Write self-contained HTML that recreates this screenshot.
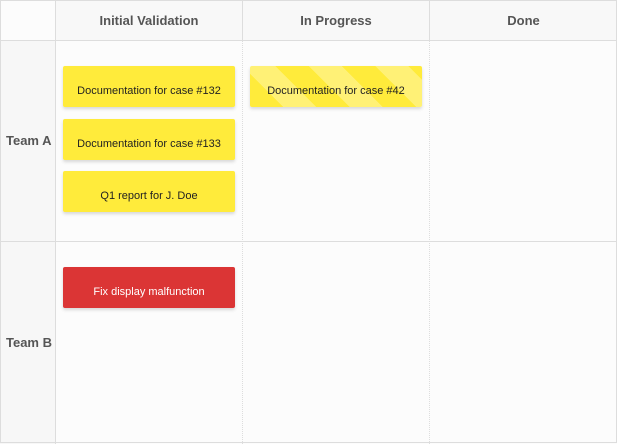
<!DOCTYPE html>
<html><head><style>
body{margin:0;width:617px;height:443px;background:#fcfcfc;font-family:"Liberation Sans",sans-serif;position:relative;overflow:hidden}
.a{position:absolute;box-sizing:border-box}
.h{font-weight:bold;color:#555;font-size:13px;text-align:center;line-height:42px;top:0;height:40px;background:#f8f8f8}
.card{position:absolute;height:41px;width:172px;border-radius:2px;font-size:11px;text-align:center;line-height:50px;color:#222;box-shadow:0 2px 3px rgba(0,0,0,.15);background:#ffeb3b}
.lab{font-weight:bold;color:#555;font-size:13px;left:0;width:55px;padding-left:6px}
</style></head><body>
<div class="a h" style="left:55px;width:187px;border-left:1px solid #ddd">Initial Validation</div>
<div class="a h" style="left:242px;width:187px;border-left:1px solid #ddd">In Progress</div>
<div class="a h" style="left:429px;width:188px;border-left:1px solid #ddd">Done</div>
<div class="a" style="left:0;top:40px;width:617px;border-top:1px solid #ddd"></div>
<div class="a" style="left:0;top:41px;width:56px;height:403px;background:#f7f7f7;border-right:1px solid #ddd"></div>
<div class="a" style="left:242px;top:41px;height:403px;border-left:1px dotted #ddd"></div>
<div class="a" style="left:429px;top:41px;height:403px;border-left:1px dotted #ddd"></div>
<div class="a" style="left:0;top:241px;width:617px;border-top:1px solid #ddd"></div>
<div class="a" style="left:0;top:0;width:617px;height:443px;border:1px solid #ddd"></div>
<div class="a lab" style="top:133px">Team A</div>
<div class="a lab" style="top:335px">Team B</div>
<div class="card" style="left:63px;top:66px">Documentation for case #132</div>
<div class="card" style="left:63px;top:119px">Documentation for case #133</div>
<div class="card" style="left:63px;top:171px">Q1 report for J. Doe</div>
<div class="card" style="left:63px;top:267px;background:#db3535;color:#fff">Fix display malfunction</div>
<div class="card" style="left:250px;top:66px;background:repeating-linear-gradient(45deg,#ffeb3b 0 23.5px,#fff176 23.5px 47px)">Documentation for case #42</div>
</body></html>
